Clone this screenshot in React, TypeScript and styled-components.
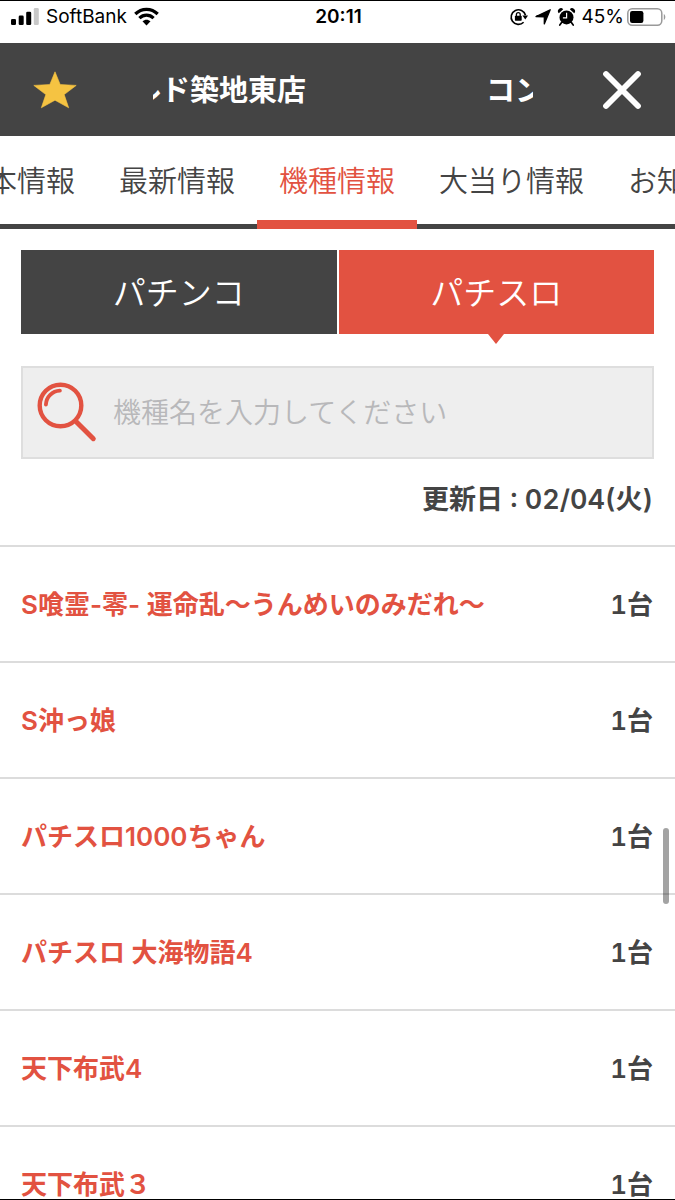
import React, { useState } from "react";
import styled, { createGlobalStyle, css } from "styled-components";

const INK = "#444444";
const RED = "#e25241";

const GlobalStyle = createGlobalStyle`
  *, *::before, *::after { box-sizing: border-box; }
  body { margin: 0; background: #fff; }
  button, input { font: inherit; color: inherit; border: 0; padding: 0; margin: 0; background: none; border-radius: 0; }
  button { cursor: pointer; }
  svg { flex: none; overflow: visible; }
`;

const Screen = styled.div`
  position: relative;
  display: flex;
  flex-direction: column;
  height: 100vh;
  overflow: hidden;
  background: #fff;
  color: ${INK};
  border-top: 1px solid #000;
  border-bottom: 1px solid #000;
  font-family: Inter, "Noto Sans CJK JP", sans-serif;
`;

const StatusBar = styled.div`
  flex: none;
  display: grid;
  grid-template-columns: 1fr auto 1fr;
  align-items: center;
  height: 42px;
  padding: 0 9px 10px 11px;
  color: #000;
  font-size: 19px;
  line-height: 24px;
`;

const StatusGroup = styled.div<{ $end?: boolean }>`
  display: flex;
  align-items: center;
  gap: 7px;
  justify-content: ${(p) => (p.$end ? "flex-end" : "flex-start")};
`;

const Battery = styled.span`
  display: flex;
  align-items: center;
  gap: 3px;
`;

const Clock = styled.time`
  font-weight: 600;
`;

const Header = styled.header`
  flex: none;
  display: flex;
  align-items: center;
  height: 93px;
  background: ${INK};
  color: #fff;
`;

const IconButton = styled.button<{ $side: "left" | "right" }>`
  flex: none;
  display: flex;
  justify-content: ${(p) => (p.$side === "left" ? "flex-start" : "flex-end")};
  width: ${(p) => (p.$side === "left" ? 153 : 142)}px;
  padding: ${(p) => (p.$side === "left" ? "0 0 0 33px" : "0 33px 0 0")};
`;

const Marquee = styled.h1`
  flex: 1;
  display: flex;
  justify-content: space-between;
  margin: 0;
  padding-top: 2px;
  overflow: hidden;
  white-space: nowrap;
  font-size: 29px;
  line-height: 40px;
  font-weight: 600;
`;

const MarqueeTail = styled.span`
  margin-left: -21px;
`;

const MarqueeHead = styled.span`
  margin-right: -11px;
`;

const TabBar = styled.nav`
  flex: none;
  display: flex;
  height: 93px;
  overflow: hidden;
  box-shadow: inset 0 -5px ${INK};
`;

const TabTrack = styled.div`
  flex: none;
  display: flex;
  margin-left: -63px;
`;

const Tab = styled.a<{ $active?: boolean }>`
  padding: 24px 22px 0;
  font-size: 29px;
  line-height: 44px;
  font-weight: 350;
  color: inherit;
  text-decoration: none;
  white-space: nowrap;
  ${(p) =>
    p.$active &&
    css`
      color: ${RED};
      border-bottom: 9px solid ${RED};
    `}
`;

const Filters = styled.section`
  flex: none;
  display: flex;
  flex-direction: column;
  gap: 32px;
  padding: 21px 21px 0;
`;

const Segments = styled.div`
  display: grid;
  grid-template-columns: 1fr 1fr;
  gap: 2px;
`;

const Segment = styled.button<{ $active: boolean }>`
  position: relative;
  height: 84px;
  padding-top: 2px;
  background: ${(p) => (p.$active ? RED : INK)};
  color: #fff;
  font-size: 33px;
  line-height: 48px;
  font-weight: 350;
  ${(p) =>
    p.$active &&
    css`
      &::after {
        content: "";
        position: absolute;
        top: 100%;
        left: 50%;
        margin-left: -8px;
        border: 8px solid transparent;
        border-top: 10px solid ${RED};
        border-bottom: 0;
      }
    `}
`;

const SearchBox = styled.label`
  display: flex;
  align-items: center;
  gap: 16px;
  height: 93px;
  padding: 0 14px;
  background: #eee;
  border: 2px solid #dedede;
`;

const SearchInput = styled.input`
  flex: 1;
  min-width: 0;
  height: 60px;
  font-size: 28px;
  line-height: 40px;
  font-weight: 350;
  outline: 0;
  &::placeholder {
    color: #b8b8ba;
    opacity: 1;
  }
`;

const Updated = styled.p`
  flex: none;
  margin: 0;
  padding: 21px 22px 25px;
  font-size: 27px;
  line-height: 40px;
  font-weight: 600;
  font-variant-numeric: tabular-nums;
  text-align: right;
`;

const MachineList = styled.ul`
  flex: none;
  margin: 0;
  padding: 0;
  list-style: none;
`;

const MachineRow = styled.li`
  display: flex;
  align-items: center;
  justify-content: space-between;
  height: 116px;
  padding: 2px 22px 0 21px;
  border-top: 2px solid #dcdcdc;
  font-size: 26px;
  line-height: 40px;
  font-weight: 600;
`;

const MachineLink = styled.a`
  color: ${RED};
  text-decoration: none;
`;

const MachineCount = styled.span`
  font-variant-numeric: tabular-nums;
`;

const ScrollThumb = styled.div`
  position: absolute;
  top: 827px;
  right: 6px;
  width: 6px;
  height: 76px;
  border-radius: 3px;
  background: rgba(0, 0, 0, 0.36);
`;

const SignalIcon = () => (
  <svg width="28" height="18" viewBox="0 0 28 18" aria-hidden="true">
    <rect x="0" y="11" width="5" height="6" rx="1.3" />
    <rect x="7.7" y="7.6" width="5" height="9.4" rx="1.3" />
    <rect x="15.2" y="3.8" width="5" height="13.2" rx="1.3" />
    <rect x="22.8" y="0" width="5" height="17" rx="1.3" fill="#c8c8c8" />
  </svg>
);

const WifiIcon = () => (
  <svg width="25" height="18" viewBox="0 0 25 18" aria-hidden="true">
    <g fill="none" stroke="#000" strokeWidth="3.2">
      <path d="M1.3 6C7.6-.3 17.4-.3 23.7 6" />
      <path d="M5.4 10.1C9.5 6.1 15.5 6.1 19.6 10.1" />
    </g>
    <path d="M12.5 17.4l-4-4.1c2.3-2.1 5.7-2.1 8 0z" />
  </svg>
);

const RotationLockIcon = () => (
  <svg width="18" height="18" viewBox="0 0 18 18" aria-hidden="true">
    <path d="M13.6 14.3A7.3 7.3 0 1 1 15.5 7.2" fill="none" stroke="#000" strokeWidth="1.6" />
    <path d="M12.4 7.4h5.6l-2.7 4z" />
    <rect x="4.9" y="7.8" width="6.8" height="5" rx=".7" />
    <path d="M6.4 8.2V6.5a1.9 1.9 0 0 1 3.8 0v1.7" fill="none" stroke="#000" strokeWidth="1.3" />
  </svg>
);

const LocationIcon = () => (
  <svg width="16" height="16" viewBox="0 0 16 16" aria-hidden="true">
    <path
      d="M15.2.8 9.3 14.9V7.9L1 7.5z"
      stroke="#000"
      strokeWidth="1.3"
      strokeLinejoin="round"
    />
  </svg>
);

const AlarmIcon = () => (
  <svg width="17" height="18" viewBox="0 0 17 18" aria-hidden="true">
    <circle cx="8.5" cy="9.4" r="7" />
    <path d="M.8 5.3A3 3 0 0 1 5.2 1.2zM16.2 5.3A3 3 0 0 0 11.8 1.2z" />
    <path d="M3.6 14.6 1.8 17M13.4 14.6l1.8 2.4" stroke="#000" strokeWidth="1.7" strokeLinecap="round" />
    <path d="M8.6 4.8v5H4.9" fill="none" stroke="#fff" strokeWidth="1.2" />
  </svg>
);

const BatteryIcon = () => (
  <svg width="39" height="18" viewBox="0 0 39 18" aria-hidden="true">
    <rect x=".8" y=".8" width="34" height="16.4" rx="4.4" fill="none" stroke="#999" strokeWidth="1.5" />
    <rect x="3" y="3" width="13.4" height="12" rx="2.2" />
    <path d="M36.8 6c2 1 2 5 0 6z" fill="#999" />
  </svg>
);

const StarIcon = () => (
  <svg width="44" height="38" viewBox="0 0 44 38" aria-hidden="true">
    <path
      d="M22 .8 27.2 13.5 43.2 14.4 31.2 23.6 35.7 36.8 22 29.2 8.3 36.8 12.8 23.6.8 14.4 16.8 13.5z"
      fill="#f5c342"
      stroke="#f5c342"
      strokeWidth=".6"
      strokeLinejoin="round"
    />
  </svg>
);

const CloseIcon = () => (
  <svg width="40" height="40" viewBox="0 0 40 40" aria-hidden="true">
    <path d="M4 4 36 36M36 4 4 36" stroke="#fff" strokeWidth="5.8" strokeLinecap="round" />
  </svg>
);

const SearchIcon = () => (
  <svg width="60" height="60" viewBox="0 0 60 60" fill="none" stroke={RED} strokeLinecap="round" aria-hidden="true">
    <circle cx="23.5" cy="22.5" r="20.8" strokeWidth="4.4" />
    <path d="M8.9 21.7A14.6 14.6 0 0 1 22.9 7.7" strokeWidth="3.8" />
    <path d="M39 38.5 56.3 55.7" strokeWidth="5" />
  </svg>
);

const tabs = ["基本情報", "最新情報", "機種情報", "大当り情報", "お知らせ"];
const kinds = ["パチンコ", "パチスロ"];
const machines = [
  "S喰霊-零- 運命乱〜うんめいのみだれ〜",
  "S沖っ娘",
  "パチスロ1000ちゃん",
  "パチスロ 大海物語4",
  "天下布武4",
  "天下布武３",
];

export default function App() {
  const [kind, setKind] = useState("パチスロ");
  return (
    <Screen lang="ja">
      <GlobalStyle />
      <StatusBar>
        <StatusGroup>
          <SignalIcon />
          <span>SoftBank</span>
          <WifiIcon />
        </StatusGroup>
        <Clock>20:11</Clock>
        <StatusGroup $end>
          <RotationLockIcon />
          <LocationIcon />
          <AlarmIcon />
          <Battery>
            <span>45%</span>
            <BatteryIcon />
          </Battery>
        </StatusGroup>
      </StatusBar>

      <Header>
        <IconButton $side="left" type="button" aria-label="お気に入り">
          <StarIcon />
        </IconButton>
        <Marquee>
          <MarqueeTail>ルド築地東店</MarqueeTail>
          <MarqueeHead>コン</MarqueeHead>
        </Marquee>
        <IconButton $side="right" type="button" aria-label="閉じる">
          <CloseIcon />
        </IconButton>
      </Header>

      <TabBar>
        <TabTrack>
          {tabs.map((t) => (
            <Tab key={t} href="#" $active={t === "機種情報"}>
              {t}
            </Tab>
          ))}
        </TabTrack>
      </TabBar>

      <Filters>
        <Segments>
          {kinds.map((k) => (
            <Segment key={k} type="button" $active={k === kind} onClick={() => setKind(k)}>
              {k}
            </Segment>
          ))}
        </Segments>
        <SearchBox>
          <SearchIcon />
          <SearchInput type="text" aria-label="機種名" placeholder="機種名を入力してください" />
        </SearchBox>
      </Filters>

      <Updated>更新日 : 02/04(火)</Updated>

      <MachineList>
        {machines.map((m) => (
          <MachineRow key={m}>
            <MachineLink href="#">{m}</MachineLink>
            <MachineCount>1台</MachineCount>
          </MachineRow>
        ))}
      </MachineList>
      <ScrollThumb />
    </Screen>
  );
}
